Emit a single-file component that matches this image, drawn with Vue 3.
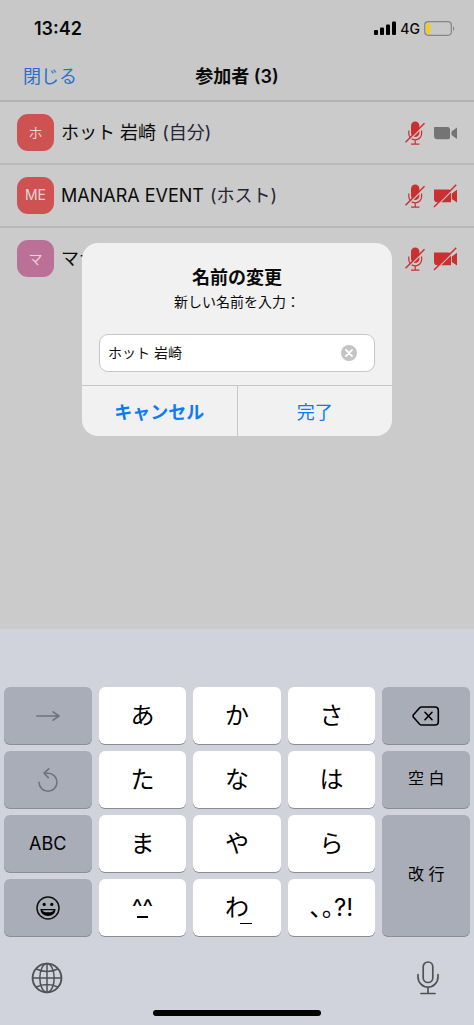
<script setup>
import { ref } from 'vue'

const name = ref('ホット 岩崎')

const participants = [
  { initials: 'ホ', name: 'ホット 岩崎', role: '(自分)', tone: 'red', camera: true },
  { initials: 'ME', name: 'MANARA EVENT', role: '(ホスト)', tone: 'red', camera: false },
  { initials: 'マ', name: 'マナラ', role: '', tone: 'pink', camera: false },
]

const keys = [
  { id: 'next', label: '次候補', kind: 'dark', icon: 'arrow' },
  { id: 'a', text: 'あ' },
  { id: 'ka', text: 'か' },
  { id: 'sa', text: 'さ' },
  { id: 'delete', label: '削除', kind: 'dark', icon: 'delete' },
  { id: 'undo', label: '逆順', kind: 'dark', icon: 'undo' },
  { id: 'ta', text: 'た' },
  { id: 'na', text: 'な' },
  { id: 'ha', text: 'は' },
  { id: 'space', text: '空 白', kind: 'dark small' },
  { id: 'abc', text: 'ABC', kind: 'dark latin' },
  { id: 'ma', text: 'ま' },
  { id: 'ya', text: 'や' },
  { id: 'ra', text: 'ら' },
  { id: 'return', text: '改 行', kind: 'dark small tall' },
  { id: 'emoji', label: '絵文字', kind: 'dark', icon: 'emoji' },
  { id: 'kaomoji', label: '顔文字', icon: 'kaomoji' },
  { id: 'wa', text: 'わ', kind: 'wa' },
  { id: 'punct', text: '､｡?!' },
]
</script>

<template>
  <div class="screen" lang="ja">
    <main class="app">
      <div class="status">
        <span class="time">13:42</span>
        <div class="signals">
          <svg width="22" height="14" viewBox="0 0 22 14" aria-hidden="true">
            <rect x="0" y="9" width="4" height="5" rx="1" />
            <rect x="6" y="6.500" width="4" height="7.500" rx="1" />
            <rect x="12" y="3.500" width="4" height="10.500" rx="1" />
            <rect x="18" y="0.500" width="4" height="13.500" rx="1" />
          </svg>
          <span class="net">4G</span>
          <svg width="31" height="15" viewBox="0 0 31 15" aria-hidden="true">
            <rect x="0.700" y="0.700" width="26.600" height="13.600" rx="3.500" fill="none" stroke="#858585" stroke-width="1.200" />
            <rect x="2.500" y="2.500" width="3.500" height="10" rx="1" fill="#ffcc00" />
            <path d="M29 5.200c1.600.8 1.600 3.800 0 4.600z" fill="#858585" />
          </svg>
        </div>
      </div>
      <header class="nav">
        <button type="button" class="close">閉じる</button>
        <h1>参加者 (3)</h1>
      </header>
      <ul class="list">
        <li v-for="p in participants" :key="p.initials" class="row">
          <span class="avatar" :class="p.tone">{{ p.initials }}</span>
          <span class="who">{{ p.name }} <span class="role">{{ p.role }}</span></span>
          <svg class="mic" width="20" height="24" viewBox="0 0 20 24" fill="none" aria-label="ミュート中">
            <rect x="6" y="0.500" width="8.400" height="15.500" rx="4.200" fill="#cb2f2f" />
            <path d="M3.800 9.500v3a6.400 6.400 0 0 0 12.800 0v-3M10.200 19v4M6 23.200h8.400" stroke="#cb2f2f" stroke-width="1.200" />
            <path d="M1.500 22L20 3.500" stroke="#cbcbcb" stroke-width="1.400" />
            <path d="M0.500 21.300L19.500 2.300" stroke="#cb2f2f" stroke-width="1.500" />
          </svg>
          <svg width="24" height="24" viewBox="0 0 24 24" aria-hidden="true">
            <g v-if="p.camera" fill="#747474">
              <path d="M1.500 6H14.500Q17 6 17 8.500V16.500Q17 18.300 15.200 18.300H4.500Q1 18.300 1 14.800V6.500Q1 6 1.500 6z" />
              <path d="M18.500 10.500L24 6.500V18L18.500 14z" />
            </g>
            <g v-else fill="#cb2f2f">
              <path d="M1 5.500H15.500Q18 5.500 18 8V18.300H4.500Q1 18.300 1 14.800z" />
              <path d="M18.800 9.500L24 5.800V18.500L18.800 15z" />
              <path d="M1.800 23.800L24 1.600" stroke="#cbcbcb" stroke-width="1.400" />
              <path d="M1 23L23.200 0.800" stroke="#cb2f2f" stroke-width="1.500" />
            </g>
          </svg>
        </li>
      </ul>
      <div class="overlay">
        <form class="dialog" role="dialog" aria-labelledby="dialog-title" @submit.prevent>
          <h2 id="dialog-title">名前の変更</h2>
          <label for="new-name">新しい名前を入力：</label>
          <div class="field">
            <input id="new-name" v-model="name" type="text" autocomplete="off" />
            <button type="button" class="clear" aria-label="クリア" @click="name = ''">
              <svg width="16" height="16" viewBox="0 0 16 16">
                <circle cx="8" cy="8" r="8" fill="#c4c4c6" />
                <path d="M5 5l6 6M11 5l-6 6" stroke="#fff" stroke-width="1.800" stroke-linecap="round" />
              </svg>
            </button>
          </div>
          <div class="actions">
            <button type="button" class="cancel">キャンセル</button>
            <button type="submit">完了</button>
          </div>
        </form>
      </div>
    </main>

    <section class="keyboard" aria-label="キーボード">
      <div class="keys">
        <button v-for="k in keys" :key="k.id" type="button" class="key" :class="k.kind" :aria-label="k.label">
          <svg v-if="k.icon === 'arrow'" width="24" height="12" viewBox="0 0 24 12" class="line muted">
            <path d="M0.800 6H22.500M17 1.800L23 6L17 10.200" />
          </svg>
          <svg v-else-if="k.icon === 'undo'" width="20" height="24" viewBox="0 0 20 24" class="line muted">
            <path d="M1 14.200A9 9 0 1 0 10 5.200H6M10.800 0.800L6 5.200L10.300 9.600" />
          </svg>
          <svg v-else-if="k.icon === 'delete'" width="28" height="20" viewBox="0 0 28 20" class="line">
            <path d="M9.500 1H23Q26.300 1 26.300 4.300V15.700Q26.300 19 23 19H9.500Q8.500 19 7.700 18.200L1.500 11.200Q0.600 10 1.500 8.800L7.700 1.800Q8.500 1 9.500 1zM13 6.300L20 13.700M20 6.300L13 13.700" />
          </svg>
          <svg v-else-if="k.icon === 'emoji'" width="24" height="24" viewBox="0 0 24 24">
            <circle cx="12" cy="12" r="11" fill="none" stroke="#111" stroke-width="1.500" />
            <circle cx="8.200" cy="8.400" r="1.600" />
            <circle cx="15.800" cy="8.400" r="1.600" />
            <path d="M4.300 13H19.700Q19 20 12 20T4.300 13z" />
            <path d="M6.300 14.200H17.700Q17 16.300 12 16.300T6.300 14.200z" fill="#a9adb8" />
          </svg>
          <span v-else-if="k.icon === 'kaomoji'" class="kaomoji">^^</span>
          <span v-else class="glyph">{{ k.text }}</span>
        </button>
      </div>
      <div class="tools">
        <button type="button" aria-label="次のキーボード">
          <svg width="32" height="32" viewBox="0 0 32 32" fill="none" stroke="#505258" stroke-width="1.500">
            <circle cx="16" cy="16" r="14.400" stroke-width="1.900" />
            <ellipse cx="16" cy="16" rx="7.200" ry="14.400" />
            <path d="M16 1.600V30.400M1.600 16H30.400M5.200 7Q16 12 26.800 7M5.200 25Q16 20 26.800 25" />
          </svg>
        </button>
        <button type="button" class="dictate" aria-label="音声入力">
          <svg width="22" height="34" viewBox="0 0 22 34" fill="none" stroke="#505258" stroke-width="1.700" stroke-linecap="round">
            <rect x="6.200" y="1" width="9.600" height="20.500" rx="4.800" />
            <path d="M1 13.500V16a10 10 0 0 0 20 0V13.500M11 26V32.500M4 32.500H18" />
          </svg>
        </button>
      </div>
      <div class="home"></div>
    </section>
  </div>
</template>

<style>
body {
  margin: 0;
}
</style>

<style scoped>
.screen {
  min-height: 100vh;
  display: flex;
  flex-direction: column;
  background: #cbcbcb;
  color: #0a0a0a;
  font-family: Inter, "Noto Sans CJK JP", sans-serif;
  font-size: 18px;
}
button {
  border: 0;
  padding: 0;
  background: none;
  color: inherit;
  font: inherit;
  display: flex;
  align-items: center;
  justify-content: center;
}
svg {
  display: block;
  flex: none;
}
.app {
  position: relative;
  flex: 1;
}
.status {
  height: 56px;
  display: flex;
  align-items: center;
  justify-content: space-between;
  padding: 0 19px 0 34px;
  background: #c8c8c8;
}
.time {
  font-weight: 600;
}
.signals {
  display: flex;
  align-items: center;
  gap: 4px;
}
.net {
  font-size: 14px;
  font-weight: 500;
}
.nav {
  height: 38px;
  display: grid;
  grid-template-columns: 1fr auto 1fr;
  align-items: center;
  padding: 0 23px 6px;
  background: #c8c8c8;
  border-bottom: 2px solid #b4b4b4;
}
.close {
  justify-self: start;
  color: #2870cc;
}
h1 {
  margin: 0;
  font-size: 18px;
  font-weight: 600;
}
.list {
  list-style: none;
  margin: 0;
  padding: 0;
}
.row {
  height: 61px;
  display: flex;
  align-items: center;
  padding: 0 17px;
  border-bottom: 2px solid #b9b9b9;
}
.row:last-child {
  border: 0;
}
.avatar {
  box-sizing: border-box;
  width: 37px;
  height: 37px;
  padding-bottom: 2px;
  border-radius: 11px;
  display: flex;
  align-items: center;
  justify-content: center;
  color: #e6d5d5;
  font-size: 14px;
}
.red {
  background: #cf5252;
}
.pink {
  background: #ba7097;
}
.who {
  flex: 1;
  margin-left: 7px;
  padding-bottom: 4px;
  white-space: nowrap;
}
.role {
  color: #252535;
  margin-left: 1px;
}
.mic {
  margin-right: 8px;
}
.overlay {
  position: absolute;
  inset: 0;
  padding: 243px 24px 0;
}
.dialog {
  max-width: 310px;
  margin: 0 auto;
  border-radius: 16px;
  background: #f1f1f1;
  overflow: hidden;
  display: flex;
  flex-direction: column;
  text-align: center;
}
h2 {
  margin: 22px 0 0;
  font-size: 18px;
  line-height: 26px;
  font-weight: 600;
}
label {
  font-size: 14px;
  line-height: 21px;
}
.field {
  margin: 22px 17px 13px;
  height: 36px;
  display: flex;
  align-items: center;
  background: #fff;
  border: 1px solid #c6c6c8;
  border-radius: 9px;
  padding: 0 17px 0 8px;
}
input {
  flex: 1;
  min-width: 0;
  border: 0;
  outline: 0;
  padding: 0 0 2px;
  background: none;
  color: #111;
  font: inherit;
  font-size: 14px;
}
.actions {
  display: flex;
  height: 50px;
  border-top: 1px solid #c6c6c8;
}
.actions button {
  flex: 1;
  color: #0a7aff;
}
.actions .cancel {
  font-weight: 600;
  border-right: 1px solid #c6c6c8;
}
.keyboard {
  background: #d0d3db;
  padding: 58px 4px 9px;
}
.keys {
  display: grid;
  grid-template-columns: repeat(5, 1fr);
  grid-auto-rows: 57px;
  gap: 7px;
}
.key {
  background: #fff;
  border-radius: 6px;
  box-shadow: 0 1px 0 #8b8d92;
  font-size: 24px;
  color: #000;
}
.glyph {
  padding-bottom: 5px;
}
.dark {
  background: #a9adb8;
}
.small {
  font-size: 16px;
}
.latin {
  font-size: 18px;
}
.latin .glyph {
  padding-bottom: 1px;
}
.tall {
  grid-row: span 2;
}
.wa {
  position: relative;
}
.wa::after {
  content: "";
  position: absolute;
  left: 47px;
  bottom: 12px;
  width: 12px;
  height: 1px;
  background: #000;
}
.line {
  fill: none;
  stroke: #000;
  stroke-width: 1.6;
  stroke-linecap: round;
  stroke-linejoin: round;
}
.muted {
  stroke: #70737b;
}
.kaomoji {
  display: flex;
  flex-direction: column;
  align-items: center;
  font-size: 22px;
  font-weight: 500;
  line-height: 18px;
}
.kaomoji::after {
  content: "";
  width: 11px;
  height: 2px;
  background: #000;
}
.tools {
  display: flex;
  justify-content: space-between;
  align-items: center;
  padding: 0 27px;
  height: 74px;
}
.tools svg {
  margin-top: 10px;
}
.dictate {
  margin-right: 4px;
}
.home {
  width: 36%;
  height: 6px;
  margin: 0 auto;
  border-radius: 3px;
  background: #000;
}
</style>
